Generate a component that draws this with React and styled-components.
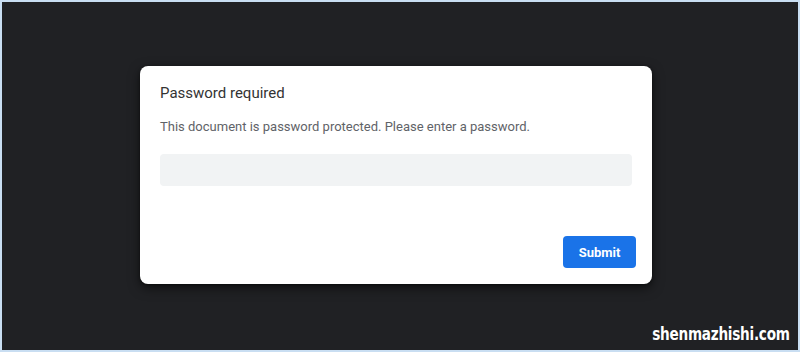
import React from "react";
import styled, { createGlobalStyle } from "styled-components";

const Global = createGlobalStyle`
  html, body { margin: 0; padding: 0; }
  body { font-family: Roboto, "Liberation Sans", sans-serif; }
`;

const Frame = styled.div`
  position: relative;
  box-sizing: border-box;
  width: 800px;
  height: 352px;
  border: 2px solid #c9def2;
  background: #202124;
  padding: 64px 0 0 138px;
  overflow: hidden;
`;

const Dialog = styled.div`
  box-sizing: border-box;
  width: 512px;
  height: 218px;
  background: #ffffff;
  border-radius: 8px;
  box-shadow: 0 4px 12px rgba(0, 0, 0, 0.55), 0 1px 3px rgba(0, 0, 0, 0.4);
  padding: 17px 16px 16px 20px;
  display: flex;
  flex-direction: column;
`;

const Title = styled.div`
  font-size: 15px;
  color: #333333;
  line-height: 20px;
  margin: 0 0 15px 0;
`;

const Message = styled.div`
  font-size: 13px;
  color: #5f6368;
  line-height: 18px;
  margin-bottom: 18px;
`;

const Input = styled.input`
  box-sizing: border-box;
  width: 472px;
  height: 32px;
  border: none;
  outline: none;
  border-radius: 4px;
  background: #f1f3f4;
  padding: 0 8px;
  font-family: inherit;
  font-size: 13px;
`;

const Footer = styled.div`
  margin-top: auto;
  display: flex;
  justify-content: flex-end;
`;

const Button = styled.button`
  box-sizing: border-box;
  width: 73px;
  height: 32px;
  border: none;
  border-radius: 4px;
  background: #1a73e8;
  color: #ffffff;
  font-family: Roboto, "Liberation Sans", sans-serif;
  font-weight: 700;
  font-size: 13px;
  cursor: pointer;
`;

const Watermark = styled.div`
  position: absolute;
  right: 8px;
  bottom: 6px;
  font-family: "DejaVu Sans Condensed", "DejaVu Sans", sans-serif;
  font-weight: 700;
  font-size: 18px;
  letter-spacing: -0.3px;
  color: #ffffff;
  line-height: 20px;
  transform: scaleX(0.84);
  transform-origin: right center;
`;

export default function App() {
  return (
    <>
      <Global />
      <Frame>
        <Dialog>
          <Title>Password required</Title>
          <Message>This document is password protected. Please enter a password.</Message>
          <Input type="password" />
          <Footer>
            <Button>Submit</Button>
          </Footer>
        </Dialog>
        <Watermark>shenmazhishi.com</Watermark>
      </Frame>
    </>
  );
}
